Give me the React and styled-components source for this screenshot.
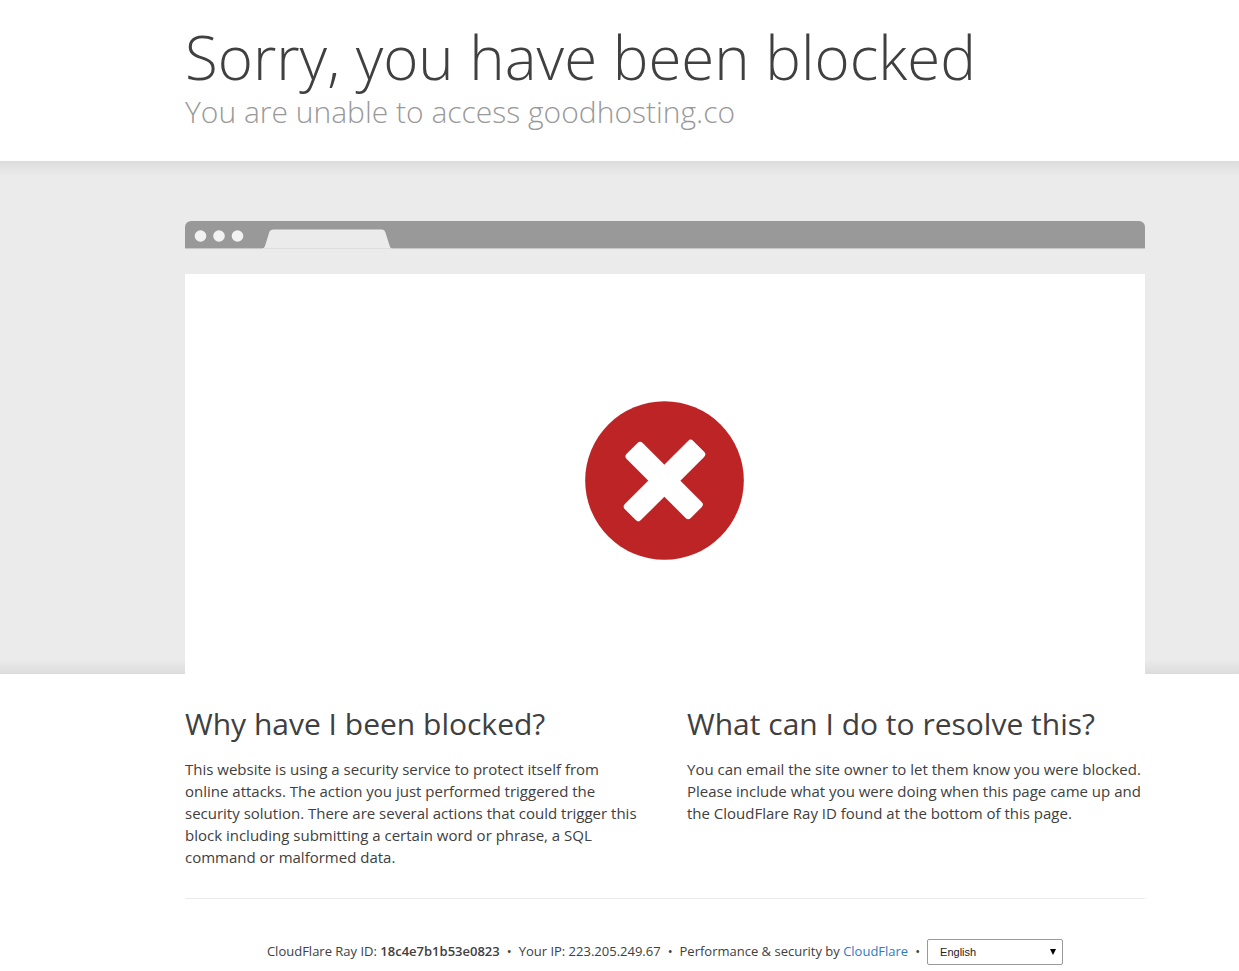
import { useState } from "react";
import styled, { createGlobalStyle } from "styled-components";

const GlobalStyle = createGlobalStyle`
  body {
    margin: 0;
    background: #fff;
    color: #404040;
    font-family: "Open Sans", sans-serif;
    font-size: 15px;
    line-height: 22px;
  }
`;

const Wrapper = styled.div`
  max-width: 960px;
  margin: 0 94px 0 185px;
`;

const Header = styled.header`
  padding: 21px 0 30px;
`;

const Title = styled.h1`
  margin: 0;
  font-size: 60px;
  font-weight: 300;
  line-height: 72px;
`;

const Subtitle = styled.h2`
  margin: 0;
  color: #999;
  font-size: 30px;
  font-weight: 300;
  line-height: 38px;
`;

const Highlight = styled.section`
  padding-top: 60px;
  background:
    linear-gradient(to bottom, #dcdcdc, #ebebeb) top / 100% 15px no-repeat,
    linear-gradient(to top, #dcdcdc, #ebebeb) bottom / 100% 15px no-repeat,
    #ebebeb;
`;

const BrowserBar = styled.div`
  display: flex;
  align-items: flex-end;
  height: 27px;
  background: #999;
  border-bottom: 1px solid #c8c8c8;
  border-radius: 6px 6px 0 0;
`;

const BarArt = styled.svg`
  display: block;
  width: 210px;
  height: 28px;
  margin-bottom: -1px;
`;

const Screen = styled.div`
  display: flex;
  align-items: center;
  justify-content: center;
  box-sizing: border-box;
  height: 400px;
  margin-top: 25px;
  padding: 12px 2px 0 0;
  background: #fff;
`;

const Columns = styled.div`
  display: grid;
  grid-template-columns: 1fr 1fr;
  column-gap: 44px;
  padding: 30px 0;
`;

const ColumnTitle = styled.h2`
  margin: 0 0 14px;
  font-size: 30px;
  font-weight: 400;
  line-height: 40px;
`;

const Text = styled.p`
  margin: 0;
`;

const Footer = styled.footer`
  display: flex;
  align-items: flex-start;
  justify-content: center;
  flex-wrap: wrap;
  gap: 7px;
  padding-top: 40px;
  border-top: 1px solid #ebebeb;
  font-size: 13px;
  line-height: 24px;
`;

const Strong = styled.strong`
  font-weight: 600;
`;

const Link = styled.a`
  color: #2f7bbf;
  text-decoration: none;
`;

const Select = styled.select`
  width: 136px;
  height: 26px;
  padding: 0 12px;
  appearance: none;
  border: 1px solid #999;
  border-radius: 2px;
  background: #fff;
  color: #222;
  font-family: "Liberation Sans", Arial, sans-serif;
  font-size: 11px;
`;

const SelectBox = styled.label`
  display: grid;
  align-items: center;

  > * {
    grid-area: 1 / 1;
  }
`;

const Arrow = styled.svg`
  justify-self: end;
  width: 6px;
  height: 6px;
  margin-right: 7px;
  pointer-events: none;
`;

const columns = [
  {
    title: "Why have I been blocked?",
    text: "This website is using a security service to protect itself from online attacks. The action you just performed triggered the security solution. There are several actions that could trigger this block including submitting a certain word or phrase, a SQL command or malformed data.",
  },
  {
    title: "What can I do to resolve this?",
    text: "You can email the site owner to let them know you were blocked. Please include what you were doing when this page came up and the CloudFlare Ray ID found at the bottom of this page.",
  },
];

function BlockedIcon() {
  return (
    <svg width="159" height="159" viewBox="0 0 477 477" aria-hidden="true">
      <circle cx="238.5" cy="238.5" r="238" fill="#bd2426" />
      <g fill="#fff">
        <rect x="-145" y="-34" width="290" height="68" rx="11" transform="translate(238.5 238.5) rotate(-45)" />
        <rect x="-136" y="-34" width="272" height="68" rx="11" transform="translate(237.5 238.5) rotate(45)" />
      </g>
    </svg>
  );
}

function App() {
  const [language, setLanguage] = useState("en");

  return (
    <>
      <GlobalStyle />
      <Header>
        <Wrapper>
          <Title>Sorry, you have been blocked</Title>
          <Subtitle>You are unable to access goodhosting.co</Subtitle>
        </Wrapper>
      </Header>

      <Highlight>
        <Wrapper>
          <BrowserBar>
            <BarArt viewBox="0 0 210 28" aria-hidden="true">
              <g fill="#f2f2f2">
                <circle cx="15.5" cy="15" r="5.8" />
                <circle cx="34" cy="15" r="5.8" />
                <circle cx="52.5" cy="15" r="5.8" />
              </g>
              <path d="M77 28 Q79 27.5 80 25 L84.3 11 Q85.1 8.5 88 8.5 H197 Q199.5 8.5 200.3 11 L204.7 25 Q205.5 27.5 207 28 Z" fill="#ebebeb" />
              <path d="M79 27.5 H206" stroke="#dedede" />
            </BarArt>
          </BrowserBar>
          <Screen>
            <BlockedIcon />
          </Screen>
        </Wrapper>
      </Highlight>

      <Wrapper>
        <Columns>
          {columns.map((column) => (
            <div key={column.title}>
              <ColumnTitle>{column.title}</ColumnTitle>
              <Text>{column.text}</Text>
            </div>
          ))}
        </Columns>

        <Footer>
          <span>
            CloudFlare Ray ID: <Strong>18c4e7b1b53e0823</Strong>
          </span>
          <span>•</span>
          <span>Your IP: 223.205.249.67</span>
          <span>•</span>
          <span>
            Performance &amp; security by <Link href="#cloudflare">CloudFlare</Link>
          </span>
          <span>•</span>
          <SelectBox>
            <Select
              aria-label="Language"
              value={language}
              onChange={(e) => setLanguage(e.target.value)}
            >
              <option value="en">English</option>
            </Select>
            <Arrow viewBox="0 0 6 6" aria-hidden="true">
              <path d="M0 0 H6 L3 6 Z" fill="#000" />
            </Arrow>
          </SelectBox>
        </Footer>
      </Wrapper>
    </>
  );
}

export default App;
